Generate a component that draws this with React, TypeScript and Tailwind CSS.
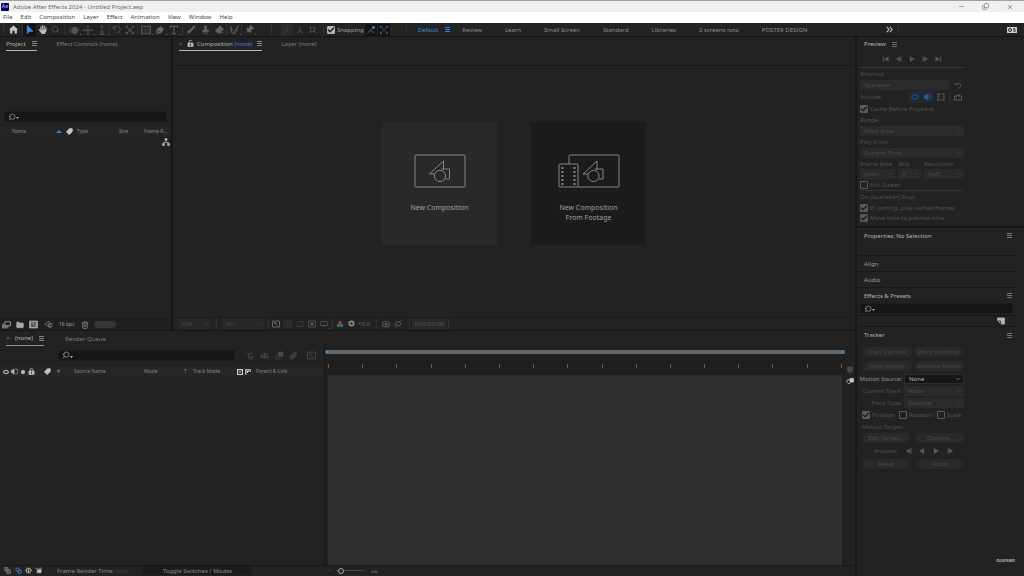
import type { ReactNode } from "react";
import {
  Brush,
  Camera,
  Check,
  ChevronDown,
  Copy,
  Eraser,
  Folder,
  Minus,
  Pin,
  Search,
  Stamp,
  Tag,
  Trash2,
  X,
} from "lucide-react";
import clsx from "clsx";

const MENUS = [
  "File",
  "Edit",
  "Composition",
  "Layer",
  "Effect",
  "Animation",
  "View",
  "Window",
  "Help",
];

const WORKSPACES = [
  "Review",
  "Learn",
  "Small Screen",
  "Standard",
  "Libraries",
  "2 screens roto",
  "POSTER DESIGN",
];

interface IconProps {
  children: ReactNode;
  className?: string;
}

/** Small stroked drawing on a 16 unit grid */
function Glyph({ children, className = "size-[10px]" }: IconProps) {
  return (
    <svg
      viewBox="0 0 16 16"
      className={clsx("shrink-0", className)}
      fill="none"
      stroke="currentColor"
      strokeWidth={1.5}
      aria-hidden="true"
    >
      {children}
    </svg>
  );
}

function Padlock({ open, className }: { open?: boolean; className?: string }) {
  return (
    <Glyph className={clsx("size-[7px]", className)}>
      <path d="M2 7h12v8H2z" fill="currentColor" />
      <path d={open ? "M5 7V4a3 3 0 0 1 6-1" : "M5 7V4a3 3 0 0 1 6 0v3"} strokeWidth={2} />
      <path d="M8 9v4" stroke="#222" strokeWidth={2} />
    </Glyph>
  );
}

function Bars({ className = "text-[#858585]" }: { className?: string }) {
  return (
    <button type="button" aria-label="Panel menu" className={className}>
      <svg viewBox="0 0 5 5" className="block size-[5px]" fill="currentColor">
        <path d="M0 0h5v1H0zM0 2h5v1H0zM0 4h5v1H0z" />
      </svg>
    </button>
  );
}

function Sep({ className }: { className?: string }) {
  return <span className={clsx("h-[11px] w-px shrink-0 bg-[#303030]", className)} />;
}

interface ToolProps {
  label: string;
  children: ReactNode;
  className?: string;
  active?: boolean;
  more?: boolean;
}

function Tool({ label, children, className = "w-[13px] text-[#555]", active, more }: ToolProps) {
  return (
    <button
      type="button"
      aria-label={label}
      className={clsx(
        "relative flex h-[12px] shrink-0 items-center justify-center",
        active && "bg-[#141414]",
        className,
      )}
    >
      {children}
      {more && <span className="absolute right-0 bottom-px size-px bg-[#666]" />}
    </button>
  );
}

interface TickProps {
  label: string;
  checked?: boolean;
  dim?: boolean;
}

function Tick({ label, checked, dim = true }: TickProps) {
  return (
    <label
      className={clsx(
        "flex items-center gap-[2px] whitespace-nowrap",
        dim ? "text-[#505050]" : "text-[#a0a0a0]",
      )}
    >
      <span className="relative flex size-[8px] shrink-0">
        <input
          type="checkbox"
          defaultChecked={checked}
          className={clsx(
            "size-[8px] appearance-none rounded-[1px] border",
            dim
              ? "border-[#5a5a5a] checked:bg-[#5a5a5a]"
              : "border-[#b4b4b4] checked:bg-[#b4b4b4]",
          )}
        />
        {checked && (
          <Check
            className="pointer-events-none absolute inset-0 size-[8px] text-[#1c1c1c]"
            strokeWidth={4}
          />
        )}
      </span>
      {label}
    </label>
  );
}

interface DropProps {
  label: string;
  value: string;
  className?: string;
}

function Drop({ label, value, className = "w-full bg-[#2a2a2a] text-[#4c4c4c]" }: DropProps) {
  return (
    <span className={clsx("relative flex h-[10px] items-center", className)}>
      <select
        aria-label={label}
        defaultValue={value}
        className="h-full w-full appearance-none pl-[4px] leading-none outline-none"
      >
        <option>{value}</option>
      </select>
      <ChevronDown className="pointer-events-none absolute right-[2px] size-[6px]" />
    </span>
  );
}

function SearchBox({ label, className }: { label: string; className?: string }) {
  return (
    <label
      className={clsx(
        "flex h-[11px] items-center border border-[#1d1d1d] bg-[#151515] pl-[3px] text-[#b0b0b0]",
        className,
      )}
    >
      <Search className="size-[8px] shrink-0 -scale-x-100" />
      <svg viewBox="0 0 3 2" className="mt-[3px] h-[2px] w-[3px] shrink-0 fill-current">
        <path d="M0 0h3L1.500 2z" />
      </svg>
      <input aria-label={label} className="h-full min-w-0 flex-1 outline-none" />
    </label>
  );
}

function Pill({ children }: { children: ReactNode }) {
  return (
    <button
      type="button"
      className="h-[10px] flex-1 rounded-full bg-[#292929] text-center whitespace-nowrap text-[#4a4a4a]"
    >
      {children}
    </button>
  );
}

/** Triangle, square and circle mark used on the composition cards */
function Shapes() {
  return (
    <>
      <path d="M5 14H0L14 1v9" />
      <path d="M12 9h8v10h-4" />
      <circle cx="10.5" cy="16" r="5.6" />
    </>
  );
}

function TitleBar() {
  return (
    <header>
      <div className="flex h-[12px] items-center border-t border-[#a19ea5] bg-[#f0f0f0] text-[#6c6c6c]">
        <span className="ml-px flex size-[8px] items-center justify-center rounded-[1px] bg-[#00005b] text-[5px] font-bold text-[#9999ff]">
          Ae
        </span>
        <h1 className="ml-[4px] flex-1 whitespace-nowrap">
          Adobe After Effects 2024 - Untitled Project.aep
        </h1>
        <div className="flex items-center gap-[17px] pr-[10px]">
          <button type="button" aria-label="Minimize">
            <Minus className="size-[7px]" />
          </button>
          <button type="button" aria-label="Restore">
            <Copy className="size-[7px] -scale-y-100" />
          </button>
          <button type="button" aria-label="Close">
            <X className="size-[8px]" />
          </button>
        </div>
      </div>
      <nav className="flex h-[11px] items-center gap-[8px] bg-white pb-px pl-[3px] text-[#484848]">
        {MENUS.map((m) => (
          <button key={m} type="button">
            {m}
          </button>
        ))}
      </nav>
    </header>
  );
}

function Toolbar() {
  return (
    <div className="flex h-[14px] items-center border-b border-[#141414] bg-[#232323] text-[#8d8d8d]">
      <Sep className="ml-[3px]" />
      <Tool label="Home" className="w-[18px] text-[#c8c8c8]">
        <Glyph className="size-[9px]">
          <path d="M8 1 0 8h2v7h4v-5h4v5h4V8h2z" fill="currentColor" stroke="none" />
        </Glyph>
      </Tool>
      <Sep />
      <Tool label="Selection" active className="w-[13px] text-[#3b8fe6]">
        <Glyph className="size-[9px]">
          <path d="M4 1v14l4-4h6z" fill="currentColor" />
        </Glyph>
      </Tool>
      <Tool label="Hand" className="w-[13px] text-[#b8b8b8]">
        <Glyph className="size-[9px]">
          <path d="M5 8V3M8 7V1M11 8V2M14 9V5M2 8l3 4" strokeWidth={2} strokeLinecap="round" />
          <path d="M4 8h11v3l-3 5H7l-4-5z" fill="currentColor" stroke="none" />
        </Glyph>
      </Tool>
      <Tool label="Zoom">
        <Search className="size-[9px]" />
      </Tool>
      <Sep className="mx-[2px]" />
      <Tool label="Orbit" more className="w-[14px] text-[#555]">
        <Glyph>
          <ellipse cx="8" cy="8" rx="7" ry="4" />
          <path d="M5 7l4-3 4 3v5l-4 2-4-2z" fill="currentColor" />
        </Glyph>
      </Tool>
      <Tool label="Pan camera" more className="w-[14px] text-[#555]">
        <Glyph>
          <path d="M8 1v14M1 8h14M6 3l2-2 2 2M6 13l2 2 2-2M3 6 1 8l2 2M13 6l2 2-2 2" />
        </Glyph>
      </Tool>
      <Tool label="Dolly" more className="w-[14px] text-[#555]">
        <Glyph>
          <path d="M8 1v12M5 10l3 4 3-4M6 3l2-2 2 2M4 15h8" />
        </Glyph>
      </Tool>
      <Sep />
      <Tool label="Rotate" className="w-[13px] text-[#555]">
        <Glyph className="size-[9px]">
          <path d="M3 6a6 6 0 1 1 6 8M2 2v5h5" />
        </Glyph>
      </Tool>
      <Tool label="Anchor point">
        <Glyph>
          <path d="M2 5V2h3M11 2h3v3M14 11v3h-3M5 14H2v-3M8 5v6M5 8h6M3 3l3 3M13 3l-3 3M3 13l3-3M13 13l-3-3" />
        </Glyph>
      </Tool>
      <Sep className="mx-px" />
      <Tool label="Rectangle" more className="w-[14px] text-[#5a5a5a]">
        <Glyph>
          <rect x="1" y="2" width="14" height="12" fill="#303030" />
        </Glyph>
      </Tool>
      <Tool label="Pen" more className="w-[14px] text-[#666]">
        <Glyph>
          <path d="M2 14l2-8 5-3 4 4-3 5zM9 2l5 5" fill="currentColor" />
          <path d="M2 14l5-5" stroke="#232323" />
        </Glyph>
      </Tool>
      <Tool label="Type" more className="w-[14px] text-[#6a6a6a]">
        <Glyph>
          <path d="M2 5V2h12v3M8 2v12M5 14h6" />
        </Glyph>
      </Tool>
      <Sep className="mx-px" />
      <Tool label="Brush" className="w-[14px] text-[#606060]">
        <Brush className="size-[9px]" fill="currentColor" />
      </Tool>
      <Tool label="Clone stamp" className="w-[14px] text-[#606060]">
        <Stamp className="size-[9px]" fill="currentColor" />
      </Tool>
      <Tool label="Eraser" className="w-[14px] text-[#606060]">
        <Eraser className="size-[9px]" fill="currentColor" />
      </Tool>
      <Sep />
      <Tool label="Roto brush" more className="w-[14px] text-[#606060]">
        <Glyph>
          <path d="M1 3h3v9M2 8h5M4 12l3 2M15 1 9 10l-2 4 4-2z" />
        </Glyph>
      </Tool>
      <Sep />
      <Tool label="Puppet pin" more className="w-[14px] text-[#6a6a6a]">
        <Pin className="size-[9px] rotate-45" fill="currentColor" />
      </Tool>
      <Sep className="mr-[9px] ml-[15px]" />
      <Tool label="Local axis" className="w-[12px] bg-[#2a2a2a] text-[#33485e]">
        <Glyph className="size-[8px]">
          <path d="M8 1v8l-6 5M8 9l6 5" />
        </Glyph>
      </Tool>
      <Tool label="World axis">
        <Glyph className="size-[8px]">
          <path d="M8 1v8l-6 5M8 9l6 5" />
        </Glyph>
      </Tool>
      <Tool label="View axis">
        <Glyph className="size-[8px]">
          <path d="M3 3h8v8H3zM1 1l3 3M14 1l-3 3M2 14l4-4M14 14l-3-3" />
        </Glyph>
      </Tool>
      <Sep className="mr-[3px] ml-[4px]" />
      <Tick label="Snapping" checked dim={false} />
      <Tool label="Snap to edges" active className="ml-px w-[12px] text-[#2f78c4]">
        <Glyph className="size-[8px]">
          <path d="M1 15 6 9l4 1 4 5M6 9l7-7" />
          <path d="M11 1h4v4h-4z" fill="currentColor" />
        </Glyph>
      </Tool>
      <Tool label="Snap to features" active className="ml-px w-[12px] text-[#2f78c4]">
        <Glyph className="size-[8px]">
          <path d="M1 4V1h3M12 1h3v3M15 12v3h-3M4 15H1v-3M3 3l4 4M13 3 9 7M3 13l4-4M13 13l-4-4" />
        </Glyph>
      </Tool>
      <Sep className="ml-[16px]" />
      <nav className="ml-[11px] flex flex-1 items-center gap-[23px] whitespace-nowrap">
        <span className="-mr-[11px] flex items-center gap-[7px] text-[#3583d2]">
          <button type="button">Default</button>
          <Bars className="text-[#3583d2]" />
        </span>
        {WORKSPACES.map((w) => (
          <button key={w} type="button">
            {w}
          </button>
        ))}
      </nav>
      <button type="button" aria-label="More workspaces" className="text-[#c0c0c0]">
        <Glyph className="size-[7px]">
          <path d="M2 2l5 6-5 6M9 2l5 6-5 6" strokeWidth={2.5} />
        </Glyph>
      </button>
      <Sep className="mr-[108px] ml-[5px]" />
      <button type="button" aria-label="Workspace layout" className="mr-[7px]">
        <svg viewBox="0 0 20 12" className="block h-[6px] w-[10px]">
          <rect width="20" height="12" rx="1" fill="#d0d0d0" />
          <circle cx="6" cy="6" r="3" fill="none" stroke="#222" strokeWidth="2" />
          <path d="M12 4h5M12 8h5M14 2v4M16 6v4" stroke="#222" strokeWidth="1.5" />
        </svg>
      </button>
    </div>
  );
}

function ProjectPanel() {
  return (
    <section className="flex w-[171px] shrink-0 flex-col bg-[#222] text-[#858585]">
      <div className="flex h-[14px] items-stretch gap-[20px] pl-[6px]">
        <div className="flex items-center gap-[6px] border-b border-[#b8b8b8] text-[#b4b4b4]">
          <h2>Project</h2>
          <Bars />
        </div>
        <button type="button" className="text-[#7c7c7c]">
          Effect Controls (none)
        </button>
      </div>
      <SearchBox label="Search project" className="mx-[4px] mt-[60px]" />
      <table className="mt-[4px] w-full table-fixed border-b border-[#1c1c1c] text-left text-[5px]">
        <thead>
          <tr className="h-[11px] bg-[#252525]">
            <th className="w-[64px] pl-[12px] font-normal">
              <span className="flex items-center justify-between pr-[2px]">
                Name
                <svg viewBox="0 0 6 3" className="h-[3px] w-[6px] fill-[#3583d2]">
                  <path d="M0 3 3 0l3 3z" />
                </svg>
              </span>
            </th>
            <th className="w-[13px]" aria-label="Label">
              <Tag
                className="ml-[2px] size-[7px] -scale-x-100 text-[#c8c8c8]"
                fill="currentColor"
              />
            </th>
            <th className="w-[42px] font-normal">Type</th>
            <th className="w-[25px] font-normal">Size</th>
            <th className="font-normal whitespace-nowrap">Frame R...</th>
          </tr>
        </thead>
      </table>
      <div className="flex justify-end pr-px">
        <Glyph className="size-[8px] text-[#a8a8a8]">
          <path d="M8 5v4M3 11V9h10v2" />
          <path d="M6 1h4v4H6zM1 11h4v4H1zM11 11h4v4h-4z" fill="currentColor" />
        </Glyph>
      </div>
      <div className="mt-auto flex h-[12px] items-center border-t border-[#1b1b1b] bg-[#1f1f1f] text-[#a0a0a0]">
        <Tool label="Interpret footage" className="w-[13px] text-[#a0a0a0]">
          <Glyph className="size-[9px]">
            <path d="M5 3h10v7H5zM3 6v6h9M1 8v6h9" />
          </Glyph>
        </Tool>
        <Tool label="New folder" className="w-[14px] text-[#a8a8a8]">
          <Folder className="size-[8px]" fill="currentColor" />
        </Tool>
        <Tool label="New composition" className="w-[13px] text-[#b0b0b0]">
          <Glyph className="size-[9px]">
            <path d="M1 2h14v12H1z" fill="#999" />
            <path d="M4 4h8v8H4z" fill="#4a4a4a" stroke="none" />
            <path d="M5 5h4v3H5z" fill="#5a8fc8" stroke="none" />
            <circle cx="10" cy="9" r="2" fill="#c05a4a" stroke="none" />
          </Glyph>
        </Tool>
        <Tool label="Project settings" className="w-[16px] text-[#777]">
          <Glyph className="size-[9px]">
            <path d="M1 8 9 2v9zM9 6h6M7 12h7" />
            <circle cx="11" cy="10" r="3" />
          </Glyph>
        </Tool>
        <button type="button" className="ml-[3px] text-[5px]">
          16 bpc
        </button>
        <Tool label="Delete" className="ml-[4px] w-[13px] text-[#999]">
          <Trash2 className="size-[8px]" />
        </Tool>
        <span className="ml-[2px] h-[7px] w-[22px] rounded-full bg-[#363636]" />
      </div>
    </section>
  );
}

function CompositionPanel() {
  return (
    <section className="flex min-w-0 flex-1 flex-col bg-[#222]">
      <div className="flex h-[14px] shrink-0 items-stretch gap-[19px] pl-[6px]">
        <div className="flex items-center border-b border-[#b8b8b8] text-[#b4b4b4]">
          <X className="size-[4px]" />
          <Padlock open className="ml-[4px]" />
          <h2 className="ml-[3px]">
            Composition <span className="text-[#3583d2]">(none)</span>
          </h2>
          <span className="ml-[5px] flex">
            <Bars />
          </span>
        </div>
        <button type="button" className="text-[#7c7c7c]">
          Layer (none)
        </button>
      </div>
      <div className="mt-[14px] flex flex-1 items-center justify-center gap-[34px] border-t border-[#191919] pb-[16px] text-[7px] leading-[10px] text-[#a0a0a0]">
        <button
          type="button"
          className="flex h-[123px] w-[115px] flex-col items-center bg-[#292929] pt-[32px]"
        >
          <svg viewBox="0 0 52 34" className="h-[34px] w-[52px]" fill="none" stroke="#858585">
            <rect x="1" y="1" width="50" height="32" rx="1" />
            <g transform="translate(15.5 6)">
              <Shapes />
            </g>
          </svg>
          <span className="mt-[15px]">New Composition</span>
        </button>
        <button
          type="button"
          className="flex h-[123px] w-[115px] flex-col items-center bg-[#1b1b1b] pt-[32px]"
        >
          <svg viewBox="0 0 62 34" className="h-[34px] w-[62px]" fill="none" stroke="#858585">
            <path d="M11 10V2a1 1 0 0 1 1-1h48a1 1 0 0 1 1 1v30a1 1 0 0 1-1 1H20" />
            <rect x="1" y="10" width="19" height="23" rx="1" />
            <path d="M4.500 13v18M16.500 13v18" strokeWidth="2" strokeDasharray="2 2" />
            <g transform="translate(25 6)">
              <Shapes />
            </g>
          </svg>
          <span className="mt-[15px]">
            New Composition
            <br />
            From Footage
          </span>
        </button>
      </div>
      <div className="flex h-[13px] shrink-0 items-center border-t border-[#1c1c1c] pb-px pl-[4px] text-[#4a4a4a]">
        <Drop label="Magnification" value="25%" className="w-[34px] bg-[#272727] text-[#484848]" />
        <Sep className="mx-[5px]" />
        <Drop label="Resolution" value="Full" className="w-[42px] bg-[#272727] text-[#484848]" />
        <Sep className="mr-px ml-[4px]" />
        <Tool label="Fast previews" className="w-[12px] text-[#777]">
          <Glyph className="size-[8px]">
            <path d="M1 2h14v12H1zM5 5l6 6M8 5H5v3" />
          </Glyph>
        </Tool>
        <Tool label="Transparency grid" className="w-[12px] text-[#4a4a4a]">
          <Glyph className="size-[8px]">
            <path d="M1 2h14v12H1zM4 4l8 8M12 4l-8 8" strokeDasharray="2 1" />
          </Glyph>
        </Tool>
        <Tool label="Mask visibility" className="w-[12px] text-[#30465e]">
          <Glyph className="size-[8px]">
            <path d="M2 13V8l5-5h7v10z" />
          </Glyph>
        </Tool>
        <Tool label="Region of interest" className="w-[12px] text-[#555]">
          <Glyph className="size-[8px]">
            <path d="M1 2h14v12H1z" />
            <path d="M5 6h6v4H5z" fill="currentColor" />
          </Glyph>
        </Tool>
        <Tool label="Guides" more className="w-[12px] text-[#555]">
          <Glyph className="size-[8px]">
            <path d="M1 3h14v8H1zM8 8v6M5 11h6" />
          </Glyph>
        </Tool>
        <Sep className="ml-[2px]" />
        <Tool label="Channels" className="w-[13px]">
          <svg viewBox="0 0 8 8" className="size-[8px]">
            <circle cx="4" cy="2.800" r="1.700" fill="#a83a3a" />
            <circle cx="2.400" cy="5.400" r="1.700" fill="#2f8040" />
            <circle cx="5.600" cy="5.400" r="1.700" fill="#3f58c4" />
          </svg>
        </Tool>
        <Tool label="Reset exposure" className="w-[11px] text-[#888]">
          <Glyph className="size-[7px]">
            <circle cx="8" cy="8" r="5" strokeWidth={4} />
          </Glyph>
        </Tool>
        <button type="button" className="ml-px text-[#666]">
          +0.0
        </button>
        <Sep className="mr-[3px] ml-[6px]" />
        <Tool label="Take snapshot" className="w-[12px] text-[#777]">
          <Camera className="size-[8px]" />
        </Tool>
        <Tool label="Show snapshot" className="w-[12px] text-[#666]">
          <Glyph className="size-[8px]">
            <circle cx="5" cy="11" r="3" />
            <path d="M3 7l3-4h3M8 11h4l2-4-4-3 5-3" />
          </Glyph>
        </Tool>
        <Sep className="mr-[2px] ml-[5px]" />
        <button type="button" className="h-[10px] w-[34px] bg-[#292929] text-center text-[#5a5a5a]">
          0:00:00:00
        </button>
        <Sep className="ml-[2px]" />
      </div>
    </section>
  );
}

function TimelinePanel() {
  return (
    <section className="flex min-h-0 flex-col bg-[#222] text-[#858585]">
      <div className="flex h-[15px] shrink-0 items-stretch gap-[21px] pl-[6px]">
        <div className="flex items-center border-b border-[#948e95] text-[#b4b4b4]">
          <X className="size-[4px]" />
          <h2 className="ml-[5px]">(none)</h2>
          <span className="ml-[6px] flex">
            <Bars />
          </span>
        </div>
        <button type="button" className="text-[#7c7c7c]">
          Render Queue
        </button>
      </div>
      <div className="flex min-h-0 flex-1">
        <div className="flex w-[325px] shrink-0 flex-col border-r border-[#181818]">
          <div className="flex items-center pt-[3px] pl-[58px]">
            <SearchBox label="Search layers" className="w-[177px]" />
            <Tool label="Mini flowchart" className="ml-[5px] w-[16px] text-[#4a4a4a]">
              <Glyph className="size-[9px]">
                <path d="M1 4h5M9 4h6M8 4v8h3M12 10h3v4h-3z" />
              </Glyph>
            </Tool>
            <Tool label="Hide shy layers" className="w-[16px] text-[#4a4a4a]">
              <Glyph className="size-[9px]">
                <path d="M1 12a7 8 0 0 1 14 0zM8 3v9M4 12V9h8v3" />
              </Glyph>
            </Tool>
            <Tool label="Frame blending" className="w-[14px] text-[#4a4a4a]">
              <Glyph className="size-[9px]">
                <path d="M6 2h8v8H6z" fill="currentColor" />
                <path d="M2 6v8h8" />
              </Glyph>
            </Tool>
            <Tool label="Motion blur" className="w-[14px] text-[#4a4a4a]">
              <Glyph className="size-[9px]">
                <path
                  d="M2 12c0-4 8-11 11-9s-4 11-8 11-3-2-3-2zM5 12l7-7"
                  fill="#383838"
                />
              </Glyph>
            </Tool>
            <Tool label="Graph editor" className="ml-[4px] w-[14px] text-[#4a4a4a]">
              <Glyph className="size-[9px]">
                <path d="M1 2h14v12H1zM4 4c4 0 4 8 8 8" />
              </Glyph>
            </Tool>
          </div>
          <table className="mt-[5px] w-full table-fixed text-left text-[5px]">
            <thead>
              <tr className="h-[11px] bg-[#262626]">
                <th className="w-[40px]" aria-label="Switches">
                  <span className="flex items-center gap-[2px] pl-[3px] text-[#b8b8b8]">
                    <Glyph className="size-[6px]">
                      <path d="M1 8q7-9 14 0q-7 9-14 0z" strokeWidth={3} />
                    </Glyph>
                    <Glyph className="size-[7px]">
                      <path d="M7 2v12L3 11H1V5h2z" fill="currentColor" />
                      <path d="M10 2a6 6 0 0 1 0 12" />
                    </Glyph>
                    <Glyph className="size-[6px]">
                      <circle cx="8" cy="8" r="5" fill="currentColor" />
                    </Glyph>
                    <Padlock />
                  </span>
                </th>
                <th className="w-[17px]" aria-label="Label">
                  <Tag
                    className="ml-[4px] size-[7px] -scale-x-100 text-[#c0c0c0]"
                    fill="currentColor"
                  />
                </th>
                <th className="w-[17px] font-normal">#</th>
                <th className="w-[70px] font-normal">Source Name</th>
                <th className="w-[40px] font-normal">Mode</th>
                <th className="w-[9px] font-normal">T</th>
                <th className="w-[44px] font-normal">Track Matte</th>
                <th className="w-[19px]" aria-label="Matte options">
                  <span className="flex gap-[2px] text-[#d0d0d0]">
                    <Glyph className="size-[6px]">
                      <path d="M1 1h14v14H1z" strokeWidth={4} />
                      <circle cx="8" cy="8" r="2" />
                    </Glyph>
                    <Glyph className="size-[6px]">
                      <path d="M2 15V2h12v6" strokeWidth={3} />
                      <path d="M5 5h6l-6 6z" fill="currentColor" />
                    </Glyph>
                  </span>
                </th>
                <th className="font-normal">Parent &amp; Link</th>
              </tr>
            </thead>
          </table>
        </div>

        {/* Time ruler and track area */}
        <div className="flex min-w-0 flex-1 flex-col bg-[#1f1f1f]">
          <div className="mt-[4px] flex h-[4px] rounded-full bg-[#2f84d8] px-[3px]">
            <span className="flex-1 bg-[#666]" />
          </div>
          <div className="mt-[10px] mb-[7px] flex h-[4px] justify-between px-[3px]">
            {Array.from({ length: 16 }, (_, i) => (
              <span key={i} className="w-px bg-[#5c5c5c]" />
            ))}
          </div>
          <div className="mx-[3px] flex-1 border-t border-[#2a2a2a] bg-[#303030]" />
        </div>
        <div className="flex w-[10px] shrink-0 flex-col items-center gap-[3px] pt-[20px]">
          <Glyph className="size-[8px] text-[#484848]">
            <path d="M3 2h10v8l-5 4-5-4z" fill="currentColor" />
          </Glyph>
          <Glyph className="size-[8px] text-[#c4c4c4]">
            <path d="M8 3h7v7H8z" fill="currentColor" />
            <path d="M1 9l4-5 5 6-4 4z" />
          </Glyph>
        </div>
      </div>
      <footer className="flex h-[11px] shrink-0 items-center border-t border-[#181818] pb-px text-[#888]">
        <Tool label="Layer switches" className="ml-[2px] w-[11px] text-[#777]">
          <Glyph className="size-[7px]">
            <path d="M1 1h8v8H1zM6 6h9v9H6z" fill="#555" />
          </Glyph>
        </Tool>
        <Tool label="Transfer controls" className="w-[10px] text-[#3583d2]">
          <Glyph className="size-[7px]">
            <circle cx="6" cy="6" r="4" strokeWidth={2} />
            <path d="M7 7h7v7H7z" strokeWidth={2} />
          </Glyph>
        </Tool>
        <Tool label="In and out" className="w-[10px] text-[#999]">
          <Glyph className="size-[7px]">
            <path
              d="M6 2C3 2 5 7 2 8c3 1 1 6 4 6M10 2c3 0 1 5 4 6-3 1-1 6-4 6M8 2v12"
              strokeWidth={3}
            />
          </Glyph>
        </Tool>
        <Tool label="Render time" className="w-[10px] text-[#bbb]">
          <Glyph className="size-[7px]">
            <path d="M1 3h6M5 6h9v7H5z" fill="currentColor" />
            <circle cx="12" cy="4" r="2" />
          </Glyph>
        </Tool>
        <span className="ml-[14px] w-[86px] whitespace-nowrap">
          Frame Render Time: <span className="text-[#484848]">0ms</span>
        </span>
        <button type="button" className="h-[9px] w-[109px] bg-[#1c1c1c] text-center">
          Toggle Switches / Modes
        </button>
        <Minus className="ml-[75px] size-[5px] text-[#555]" />
        <input
          type="range"
          aria-label="Timeline zoom"
          defaultValue={10}
          className="ml-[4px] h-px w-[28px] appearance-none bg-[#484848] [&::-webkit-slider-thumb]:size-[6px] [&::-webkit-slider-thumb]:appearance-none [&::-webkit-slider-thumb]:rounded-full [&::-webkit-slider-thumb]:border [&::-webkit-slider-thumb]:border-[#aaa] [&::-webkit-slider-thumb]:bg-[#222]"
        />
        <svg viewBox="0 0 8 4" className="ml-[6px] h-[4px] w-[8px] fill-[#484848]">
          <path d="M0 4 2.500 1 4 2.500 5.500 0 8 4z" />
        </svg>
      </footer>
    </section>
  );
}

function PreviewPanel() {
  return (
    <section className="bg-[#222] pb-[4px] text-[#505050]">
      <div className="flex h-[14px] items-center gap-[6px] pl-[7px] text-[#b4b4b4]">
        <h2>Preview</h2>
        <Bars className="text-[#666]" />
      </div>
      <div className="ml-[3px] w-[104px]">
        <div className="flex h-[17px] items-center justify-center border-b border-[#3a3a3a]">
          <Tool label="First frame">
            <Glyph className="size-[6px]">
              <path d="M2 1v14" strokeWidth={3} />
              <path d="M14 2v12L5 8z" fill="currentColor" />
            </Glyph>
          </Tool>
          <Tool label="Previous frame">
            <Glyph className="size-[6px]">
              <path d="M9 2v12L1 8z" fill="currentColor" />
              <path d="M13 1v14" strokeWidth={3} />
            </Glyph>
          </Tool>
          <Tool label="Play">
            <Glyph className="size-[6px]">
              <path d="M3 1v14l11-7z" fill="currentColor" />
            </Glyph>
          </Tool>
          <Tool label="Next frame">
            <Glyph className="size-[6px]">
              <path d="M3 1v14" strokeWidth={3} />
              <path d="M7 2v12l8-6z" fill="currentColor" />
            </Glyph>
          </Tool>
          <Tool label="Last frame">
            <Glyph className="size-[6px]">
              <path d="M2 2v12l9-6z" fill="currentColor" />
              <path d="M14 1v14" strokeWidth={3} />
            </Glyph>
          </Tool>
        </div>
        <div className="flex h-[12px] items-center">Shortcut</div>
        <div className="flex items-center gap-[4px]">
          <Drop
            label="Shortcut"
            value="Spacebar"
            className="w-[90px] bg-[#2a2a2a] text-[#4c4c4c]"
          />
          <button type="button" aria-label="Reset">
            <Glyph className="size-[8px]">
              <path d="M4 7a5 5 0 1 1 4 7M1 4l3 4 4-3" strokeWidth={2} />
            </Glyph>
          </button>
        </div>
        <div className="flex h-[14px] items-center">
          <span className="flex-1">Include:</span>
          <Tool label="Video" className="w-[12px] bg-[#1f2a36] text-[#25598f]">
            <Glyph className="size-[8px]">
              <path d="M1 8q7-9 14 0q-7 9-14 0z" strokeWidth={2} />
            </Glyph>
          </Tool>
          <Tool label="Audio" className="ml-px w-[12px] bg-[#1f2a36] text-[#25598f]">
            <Glyph className="size-[8px]">
              <path d="M8 2v12L4 11H1V5h3z" fill="currentColor" />
              <path d="M10 5q3 3 0 6M12 3q5 5 0 10" />
            </Glyph>
          </Tool>
          <Tool label="Overlays" className="ml-px w-[12px] text-[#5a5a5a]">
            <Glyph className="size-[8px]">
              <path d="M2 2h12v12H2zM7 8h2M2 0v16M14 0v16" />
            </Glyph>
          </Tool>
          <Sep className="mx-[2px]" />
          <Tool label="Loop" className="w-[12px] text-[#5a5a5a]">
            <Glyph className="size-[8px]">
              <path d="M4 6H1v8h14V6h-2M5 9V5h6M9 2l3 3-3 3" strokeWidth={2} />
            </Glyph>
          </Tool>
        </div>
        <div className="flex h-[10px] items-center">
          <Tick label="Cache Before Playback" checked />
        </div>
        <div className="flex h-[12px] items-center">Range</div>
        <Drop label="Range" value="Work Area" />
        <div className="flex h-[12px] items-center">Play From</div>
        <Drop label="Play From" value="Current Time" />
        <div className="grid grid-cols-[35px_23px_40px] gap-x-[3px] whitespace-nowrap">
          <span className="flex h-[11px] items-center">Frame Rate</span>
          <span className="flex h-[11px] items-center">Skip</span>
          <span className="flex h-[11px] items-center">Resolution</span>
          <Drop label="Frame Rate" value="Auto" />
          <Drop label="Skip" value="0" />
          <Drop label="Resolution" value="Half" />
        </div>
        <div className="flex h-[12px] items-center border-b border-[#333]">
          <Tick label="Full Screen" />
        </div>
        <div className="flex h-[12px] items-center">On (Spacebar) Stop:</div>
        <div className="flex h-[10px] items-center">
          <Tick label="If caching, play cached frames" checked />
        </div>
        <div className="flex h-[9px] items-center">
          <Tick label="Move time to preview time" checked />
        </div>
      </div>
    </section>
  );
}

interface SideSectionProps {
  title: string;
  children?: ReactNode;
  menu?: boolean;
}

function SideSection({ title, children, menu }: SideSectionProps) {
  return (
    <section className="mr-[7px] border-b border-[#181818]">
      <div className="flex h-[15px] items-center justify-between pr-[5px] pl-[7px] text-[#9c9c9c]">
        <h2 className={clsx(menu && "text-[#b4b4b4]")}>{title}</h2>
        {menu && <Bars className="text-[#777]" />}
      </div>
      {children}
    </section>
  );
}

function Tracker() {
  return (
    <section className="flex-1 text-[#505050]">
      <div className="mr-[7px] flex h-[16px] items-center justify-between pr-[5px] pl-[7px] text-[#b4b4b4]">
        <h2>Tracker</h2>
        <Bars className="text-[#777]" />
      </div>
      <div className="ml-[5px] w-[102px] pt-[4px]">
        <div className="flex gap-[3px]">
          <Pill>Track Camera</Pill>
          <Pill>Warp Stabilizer</Pill>
        </div>
        <div className="mt-[4px] flex gap-[3px]">
          <Pill>Track Motion</Pill>
          <Pill>Stabilize Motion</Pill>
        </div>
        <div className="mt-[3px] grid grid-cols-[40px_60px] gap-x-[2px] gap-y-[2px] text-right whitespace-nowrap">
          <span className="flex items-center justify-end text-[#909090]">Motion Source:</span>
          <Drop
            label="Motion Source"
            value="None"
            className="w-full border border-[#2c2c2c] bg-[#161616] text-[#b0b0b0]"
          />
          <span className="flex items-center justify-end">Current Track:</span>
          <Drop label="Current Track" value="None" />
          <span className="flex items-center justify-end">Track Type:</span>
          <Drop label="Track Type" value="Stabilize" />
        </div>
        <div className="flex h-[13px] items-center gap-[4px]">
          <Tick label="Position" checked />
          <Tick label="Rotation" />
          <Tick label="Scale" />
        </div>
        <div className="flex h-[11px] items-center">Motion Target:</div>
        <div className="mt-px flex gap-[6px]">
          <Pill>Edit Target...</Pill>
          <Pill>Options...</Pill>
        </div>
        <div className="flex h-[16px] items-center pl-[12px]">
          <span className="mr-[5px]">Analyze:</span>
          <Tool label="Analyze one frame back" className="w-[13px] text-[#5a5a5a]">
            <Glyph className="size-[6px]">
              <path d="M9 2v12L1 8z" fill="currentColor" />
              <path d="M13 1v14" strokeWidth={3} />
            </Glyph>
          </Tool>
          <Tool label="Analyze backward" className="w-[14px] text-[#5a5a5a]">
            <Glyph className="size-[6px]">
              <path d="M13 1v14L2 8z" fill="currentColor" />
            </Glyph>
          </Tool>
          <Tool label="Analyze forward" className="w-[14px] text-[#5a5a5a]">
            <Glyph className="size-[6px]">
              <path d="M3 1v14l11-7z" fill="currentColor" />
            </Glyph>
          </Tool>
          <Tool label="Analyze one frame forward" className="w-[13px] text-[#5a5a5a]">
            <Glyph className="size-[6px]">
              <path d="M3 1v14" strokeWidth={3} />
              <path d="M7 2v12l8-6z" fill="currentColor" />
            </Glyph>
          </Tool>
        </div>
        <div className="flex gap-[6px]">
          <Pill>Reset</Pill>
          <Pill>Apply</Pill>
        </div>
      </div>
    </section>
  );
}

export default function App() {
  return (
    <div className="flex h-screen flex-col overflow-hidden bg-[#161616] font-['Noto_Sans',sans-serif] text-[6px] leading-none">
      <TitleBar />
      <Toolbar />
      <main className="flex min-h-0 flex-1 gap-[2px]">
        <div className="grid min-w-0 flex-1 grid-rows-[293fr_245fr] gap-px">
          <div className="flex min-h-0 gap-[2px]">
            <ProjectPanel />
            <CompositionPanel />
          </div>
          <TimelinePanel />
        </div>
        <aside className="flex w-[167px] shrink-0 flex-col gap-[2px]">
          <PreviewPanel />
          <div className="flex min-h-0 flex-1 flex-col bg-[#222]">
            <SideSection title="Properties: No Selection" menu>
              <div className="h-[12px]" />
            </SideSection>
            <SideSection title="Align" />
            <SideSection title="Audio" />
            <SideSection title="Effects & Presets" menu>
              <SearchBox label="Search effects" className="mr-[4px] ml-[3px]" />
              <div className="mt-px flex h-[11px] items-center justify-end border-t border-[#161616] pr-[12px]">
                <Glyph className="size-[8px] text-[#b4b4b4]">
                  <path d="M1 2h14v12H8L1 7z" fill="currentColor" />
                  <path d="M1 8h6v6" stroke="#222" />
                </Glyph>
              </div>
            </SideSection>
            <Tracker />
            <span className="self-end pr-[9px] pb-[13px] text-[4px] font-extrabold text-[#b0b0b0] italic">
              OLUFEMO
            </span>
          </div>
        </aside>
      </main>
    </div>
  );
}
